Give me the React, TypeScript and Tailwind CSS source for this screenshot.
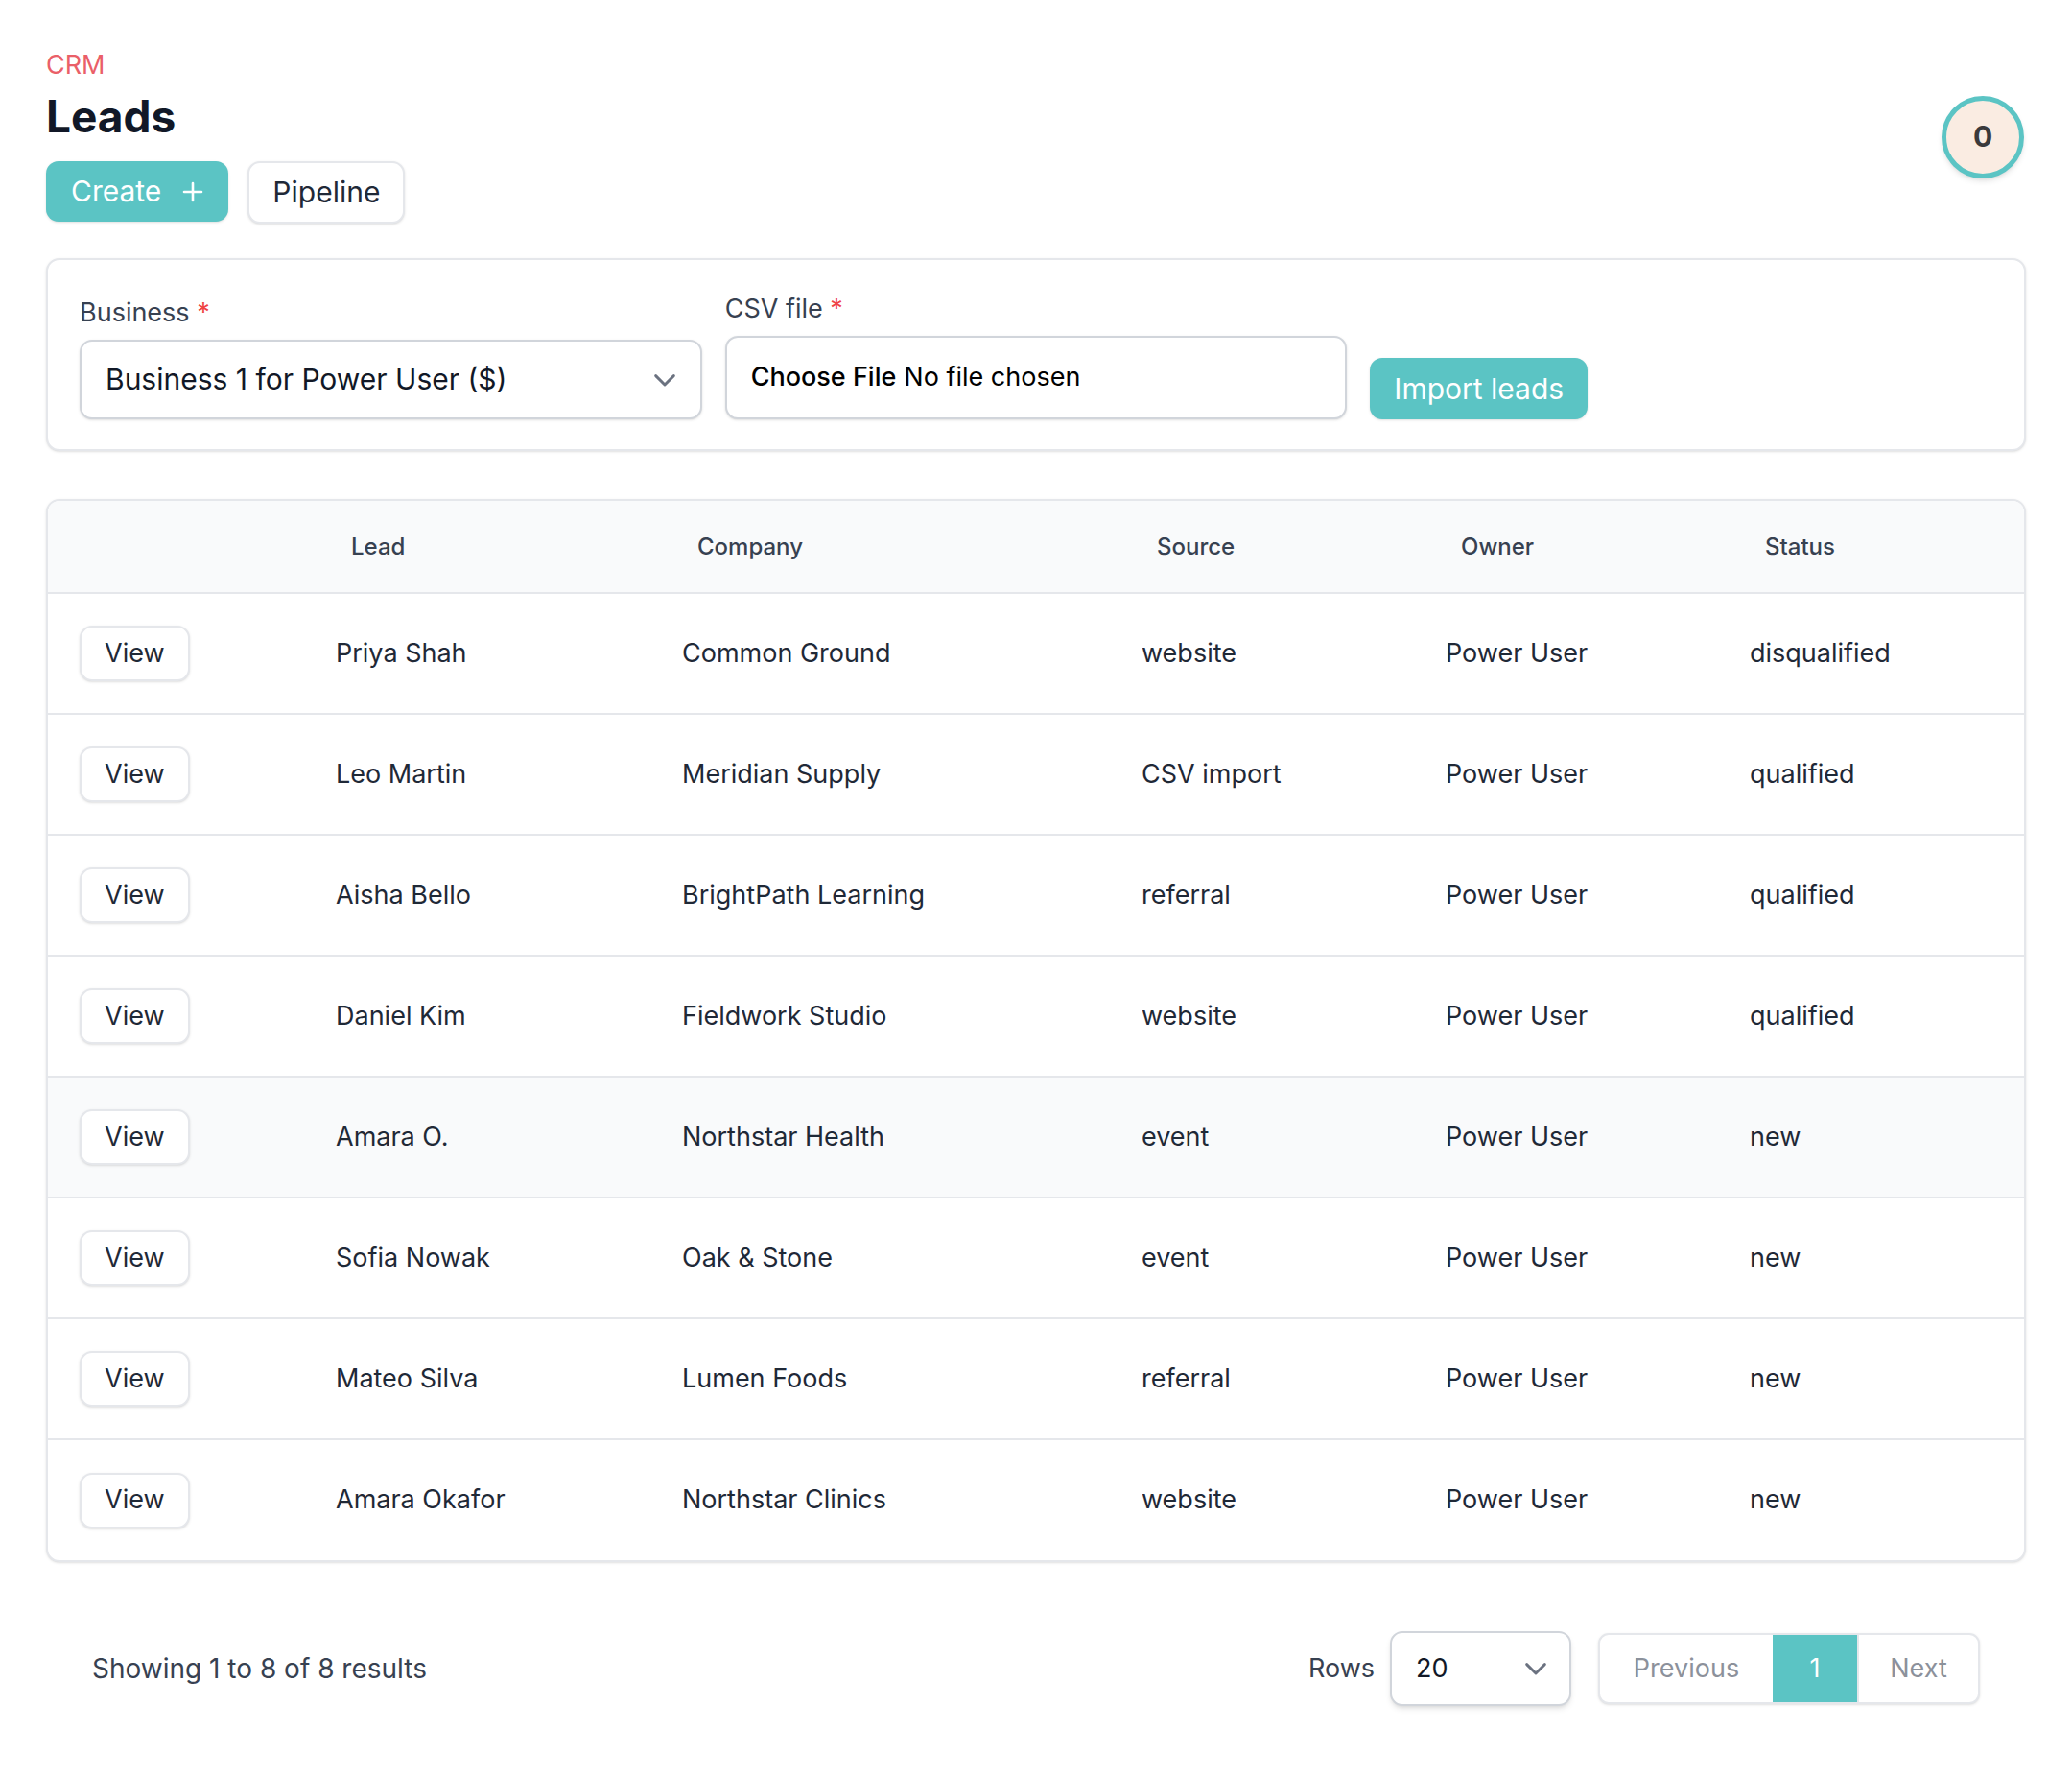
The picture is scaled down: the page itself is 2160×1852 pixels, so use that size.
import React from 'react';

type Lead = {
    name: string;
    company: string;
    source: string;
    owner: string;
    status: string;
};

const leads: Lead[] = [
    { name: 'Priya Shah', company: 'Common Ground', source: 'website', owner: 'Power User', status: 'disqualified' },
    { name: 'Leo Martin', company: 'Meridian Supply', source: 'CSV import', owner: 'Power User', status: 'qualified' },
    { name: 'Aisha Bello', company: 'BrightPath Learning', source: 'referral', owner: 'Power User', status: 'qualified' },
    { name: 'Daniel Kim', company: 'Fieldwork Studio', source: 'website', owner: 'Power User', status: 'qualified' },
    { name: 'Amara O.', company: 'Northstar Health', source: 'event', owner: 'Power User', status: 'new' },
    { name: 'Sofia Nowak', company: 'Oak & Stone', source: 'event', owner: 'Power User', status: 'new' },
    { name: 'Mateo Silva', company: 'Lumen Foods', source: 'referral', owner: 'Power User', status: 'new' },
    { name: 'Amara Okafor', company: 'Northstar Clinics', source: 'website', owner: 'Power User', status: 'new' },
];

function Chevron() {
    return (
        <svg width="30" height="30" viewBox="0 0 24 24" fill="none" stroke="#6b7280" strokeWidth="2.3" strokeLinecap="round" strokeLinejoin="round">
            <path d="M4.5 8.5l7.5 7.5 7.5-7.5" />
        </svg>
    );
}

export default function App() {
    return (
        <div className="min-h-screen bg-white px-[48px] pt-[48px] font-['Inter',sans-serif] text-[#1f2937]">
            {/* page header */}
            <div className="flex items-center justify-between">
                <div>
                    <div className="text-[27px] leading-[40px] text-[#ea5f68]">CRM</div>
                    <h1 className="mt-[5px] text-[46px] font-bold leading-[56px] text-[#111827]">Leads</h1>
                    <div className="mt-[19px] flex gap-[20px]">
                        <button className="flex h-[63px] items-center gap-[22px] rounded-[13px] bg-[#5bc4c4] px-[26px] text-[30px] text-white shadow-sm">
                            Create
                            <svg width="22" height="22" viewBox="0 0 22 22" stroke="white" strokeWidth="2.6" strokeLinecap="round">
                                <path d="M11 2v18M2 11h18" />
                            </svg>
                        </button>
                        <button className="h-[65px] rounded-[13px] border-2 border-[#e5e7eb] bg-white px-[24px] text-[30px] text-[#1f2937] shadow-sm">
                            Pipeline
                        </button>
                    </div>
                </div>
                <div className="mr-[2px] mt-[4px] flex h-[86px] w-[86px] items-center justify-center rounded-full border-[5px] border-[#5bc4c4] bg-[#faece2] text-[30px] font-bold text-[#3a3a3c] shadow-md">
                    0
                </div>
            </div>

            {/* import card */}
            <div className="mt-[36px] rounded-[14px] border-2 border-[#e5e7eb] bg-white px-[33px] pb-[31px] pt-[31px] shadow-sm">
                <div className="grid grid-cols-3 items-end gap-[24px]">
                    <div>
                        <label className="block text-[27px] leading-[40px] text-[#374151]">
                            Business <span className="text-[#ef4444]">*</span>
                        </label>
                        <div className="mt-[8px] flex h-[83px] items-center justify-between rounded-[13px] border-2 border-[#d1d5db] bg-white pl-[25px] pr-[22px] shadow-sm">
                            <span className="text-[30px] text-[#111827]">Business 1 for Power User ($)</span>
                            <Chevron />
                        </div>
                    </div>
                    <div>
                        <label className="block text-[27px] leading-[40px] text-[#374151]">
                            CSV file <span className="text-[#ef4444]">*</span>
                        </label>
                        <div className="mt-[8px] flex h-[87px] items-center rounded-[13px] border-2 border-[#d1d5db] bg-white px-[25px] text-[27px] text-black shadow-sm">
                            <span className="font-medium">Choose File</span>
                            <span className="ml-[8px]">No file chosen</span>
                        </div>
                    </div>
                    <div>
                        <button className="h-[64px] rounded-[13px] bg-[#5bc4c4] px-[25px] text-[30px] text-white shadow-sm">
                            Import leads
                        </button>
                    </div>
                </div>
            </div>

            {/* leads table */}
            <div className="mt-[50px] overflow-hidden rounded-[14px] border-2 border-[#e5e7eb] bg-white shadow-sm">
                <table className="w-full table-fixed border-collapse">
                    <colgroup>
                        <col className="w-[267px]" />
                        <col className="w-[361px]" />
                        <col className="w-[479px]" />
                        <col className="w-[317px]" />
                        <col className="w-[317px]" />
                        <col />
                    </colgroup>
                    <thead>
                        <tr className="h-[96px] border-b-2 border-[#e5e7eb] bg-[#f9fafb]">
                            <th></th>
                            <th className="pl-[49px] text-left text-[24px] font-medium text-[#374151]">Lead</th>
                            <th className="pl-[49px] text-left text-[24px] font-medium text-[#374151]">Company</th>
                            <th className="pl-[49px] text-left text-[24px] font-medium text-[#374151]">Source</th>
                            <th className="pl-[49px] text-left text-[24px] font-medium text-[#374151]">Owner</th>
                            <th className="pl-[49px] text-left text-[24px] font-medium text-[#374151]">Status</th>
                        </tr>
                    </thead>
                    <tbody>
                        {leads.map((lead, i) => (
                            <tr
                                key={lead.name}
                                className={
                                    'h-[126px] text-[27px] text-[#1f2937] ' +
                                    (i < leads.length - 1 ? 'border-b-2 border-[#e5e7eb] ' : '') +
                                    (i === 4 ? 'bg-[#f9fafb]' : '')
                                }
                            >
                                <td className="pl-[33px]">
                                    <button className="h-[58px] rounded-[13px] border-2 border-[#e5e7eb] bg-white px-[24px] text-[27px] text-[#1f2937] shadow-sm">
                                        View
                                    </button>
                                </td>
                                <td className="pl-[33px]">{lead.name}</td>
                                <td className="pl-[33px]">{lead.company}</td>
                                <td className="pl-[33px]">{lead.source}</td>
                                <td className="pl-[33px]">{lead.owner}</td>
                                <td className="pl-[33px]">{lead.status}</td>
                            </tr>
                        ))}
                    </tbody>
                </table>
            </div>

            {/* footer / pagination */}
            <div className="mt-[72px] flex items-center justify-between px-[48px] pb-[72px]">
                <div className="text-[28px] text-[#374151]">Showing 1 to 8 of 8 results</div>
                <div className="flex items-center">
                    <span className="text-[27px] text-[#374151]">Rows</span>
                    <div className="ml-[16px] flex h-[78px] w-[189px] items-center justify-between rounded-[13px] border-2 border-[#d1d5db] bg-white pl-[25px] pr-[20px] shadow-md">
                        <span className="text-[27px] text-[#111827]">20</span>
                        <Chevron />
                    </div>
                    <div className="ml-[28px] flex h-[74px] overflow-hidden rounded-[11px] border-2 border-[#e5e7eb] bg-white shadow-sm">
                        <button className="w-[180px] text-[27px] text-[#8c919b]">Previous</button>
                        <button className="w-[88px] bg-[#5bc4c4] text-[27px] text-white">1</button>
                        <button className="w-[126px] border-l-2 border-[#e5e7eb] text-[27px] text-[#8c919b]">Next</button>
                    </div>
                </div>
            </div>
        </div>
    );
}
